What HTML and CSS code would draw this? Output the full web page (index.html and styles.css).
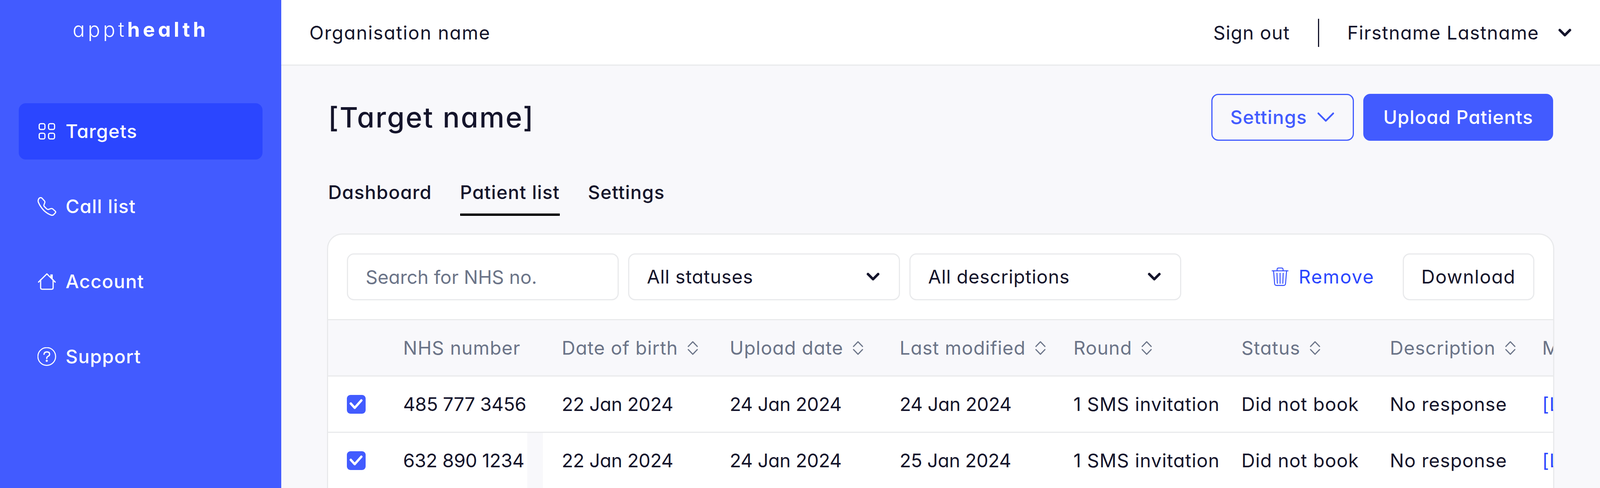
FILE: index.html
```html
<!DOCTYPE html>
<html lang="en">
<head>
<meta charset="utf-8">
<title>Target patient list</title>
<link rel="stylesheet" href="styles.css">
</head>
<body>
<div class="app">
<aside class="sidebar">
  <div class="logo"><span class="logo-light">appt</span><span class="logo-bold">health</span></div>
  <nav class="nav">
    <a class="nav-item active">
      <svg class="icon48" viewBox="48 66 144 144"><g fill="none" stroke="#fff" stroke-width="9"><rect x="61" y="79" width="44" height="44" rx="12"/><rect x="133" y="79" width="46" height="44" rx="12"/><rect x="61" y="152" width="44" height="44" rx="12"/><rect x="133" y="152" width="46" height="44" rx="12"/></g></svg>
      <span>Targets</span>
    </a>
    <a class="nav-item">
      <svg class="icon48" viewBox="48 60 144 144"><path fill="none" stroke="#fff" stroke-width="9" stroke-linejoin="round" stroke-linecap="round" d="M62 68Q72 60 82 68L102 90Q107 97 103 105L97 122Q96 128 102 134L118 150Q124 156 132 155L152 148Q160 146 166 152L184 168Q190 174 186 180L172 195Q164 202 152 198Q124 188 98 164Q70 136 54 98Q50 80 62 68Z"/></svg>
      <span>Call list</span>
    </a>
    <a class="nav-item">
      <svg class="icon48" viewBox="48 48 144 144"><g fill="none" stroke="#fff" stroke-width="9" stroke-linecap="round" stroke-linejoin="round"><path d="M56 124L120 61L184 124"/><path d="M72 106V168Q72 179 83 179H157Q168 179 168 168V106"/></g><path fill="#fff" d="M147 65H165V102L147 84Z"/></svg>
      <span>Account</span>
    </a>
    <a class="nav-item">
      <svg class="icon48" viewBox="48 54 144 144"><circle cx="119" cy="125" r="68" fill="none" stroke="#fff" stroke-width="8"/><path fill="none" stroke="#fff" stroke-width="10" stroke-linecap="round" d="M98 108Q100 90 120 90Q141 90 141 107Q141 118 128 124Q119 129 119 140"/><circle cx="119" cy="158" r="8" fill="#fff"/></svg>
      <span>Support</span>
    </a>
  </nav>
</aside>
<div class="main">
  <header class="topbar">
    <div class="org">Organisation name</div>
    <div class="account">
      <span class="tight">Sign out</span>
      <span class="divider"></span>
      <span class="name">Firstname Lastname</span>
      <svg class="icon48 user-chevron" viewBox="0 0 48 48"><path class="chev-thick" d="M11 17L24 30L37 17"/></svg>
    </div>
  </header>
  <section class="content">
    <div class="title-row">
      <h1 class="title">[Target name]</h1>
      <div class="title-actions">
        <button class="btn btn-outline"><span>Settings</span><svg class="icon48" viewBox="0 0 48 48"><path class="chev-thin" d="M5 14L24 33L43 14"/></svg></button>
        <button class="btn btn-primary">Upload Patients</button>
      </div>
    </div>
    <div class="tabs">
      <a class="tab">Dashboard</a>
      <a class="tab current">Patient list</a>
      <a class="tab">Settings</a>
    </div>
    <div class="card">
      <div class="toolbar">
        <input class="field search" placeholder="Search for NHS no.">
        <div class="field select"><span>All statuses</span><svg class="icon48" viewBox="0 0 48 48"><path class="chev-thick" d="M11 17L24 30L37 17"/></svg></div>
        <div class="field select"><span>All descriptions</span><svg class="icon48" viewBox="0 0 48 48"><path class="chev-thick" d="M11 17L24 30L37 17"/></svg></div>
        <div class="remove">
          <svg class="icon48" viewBox="33 42 144 144"><g fill="none" stroke="#2b46ff" stroke-width="7" stroke-linecap="round" stroke-linejoin="round"><path d="M44 68H166"/><path d="M82 66V58Q82 46 94 46H116Q128 46 128 58V66"/><path d="M55 68L63 165Q64 180 79 180H131Q146 180 147 165L155 68"/><path d="M81 86L84 164M105 86V164M129 86L126 164"/></g></svg>
          <span>Remove</span>
        </div>
        <button class="field download">Download</button>
      </div>
      <div class="row head">
        <div class="cell"></div>
        <div class="cell nhs">NHS number</div>
        <div class="cell gap"></div>
        <div class="cell dob"><span>Date of birth</span><svg class="sort" viewBox="0 0 27 36"><path d="M2 14L13.5 2L25 14M2 22L13.5 34L25 22"/></svg></div>
        <div class="cell up"><span>Upload date</span><svg class="sort" viewBox="0 0 27 36"><path d="M2 14L13.5 2L25 14M2 22L13.5 34L25 22"/></svg></div>
        <div class="cell mod"><span>Last modified</span><svg class="sort" viewBox="0 0 27 36"><path d="M2 14L13.5 2L25 14M2 22L13.5 34L25 22"/></svg></div>
        <div class="cell rnd"><span>Round</span><svg class="sort" viewBox="0 0 27 36"><path d="M2 14L13.5 2L25 14M2 22L13.5 34L25 22"/></svg></div>
        <div class="cell sta"><span>Status</span><svg class="sort" viewBox="0 0 27 36"><path d="M2 14L13.5 2L25 14M2 22L13.5 34L25 22"/></svg></div>
        <div class="cell des"><span>Description</span><svg class="sort" viewBox="0 0 27 36"><path d="M2 14L13.5 2L25 14M2 22L13.5 34L25 22"/></svg></div>
        <div class="cell last">Message</div>
      </div>
      <div class="row">
        <div class="cell"><span class="check"><svg viewBox="0 0 48 48"><path d="M10 22L20 33L37 14"/></svg></span></div>
        <div class="cell nhs num">485 777 3456</div>
        <div class="cell gap"></div>
        <div class="cell dob num">22 Jan 2024</div>
        <div class="cell up num">24 Jan 2024</div>
        <div class="cell mod num">24 Jan 2024</div>
        <div class="cell rnd">1 SMS invitation</div>
        <div class="cell sta">Did not book</div>
        <div class="cell des">No response</div>
        <div class="cell last link">[Link]</div>
      </div>
      <div class="row">
        <div class="cell"><span class="check"><svg viewBox="0 0 48 48"><path d="M10 22L20 33L37 14"/></svg></span></div>
        <div class="cell nhs num">632 890 1234</div>
        <div class="cell gap tinted"></div>
        <div class="cell dob num">22 Jan 2024</div>
        <div class="cell up num">24 Jan 2024</div>
        <div class="cell mod num">25 Jan 2024</div>
        <div class="cell rnd">1 SMS invitation</div>
        <div class="cell sta">Did not book</div>
        <div class="cell des">No response</div>
        <div class="cell last link">[Link]</div>
      </div>
    </div>
  </section>
</div>
</div>
</body>
</html>
```
FILE: styles.css
```css
* { box-sizing: border-box; }
body {
  margin: 0;
  font-family: Inter, "Noto Sans", sans-serif;
  font-feature-settings: "cv11";
  font-size: 48px;
  line-height: 72px;
  letter-spacing: 1px;
  color: #14142b;
  background: #f8f8fb;
}
.app { height: 1248px; overflow: hidden; display: flex; }
.icon48 { width: 48px; height: 48px; flex: none; display: block; }
.chev-thick { fill: none; stroke: #14142b; stroke-width: 6.5; stroke-linecap: round; stroke-linejoin: round; }
.chev-thin { fill: none; stroke: #425bff; stroke-width: 4.5; stroke-linecap: round; stroke-linejoin: round; }

.sidebar {
  width: 720px;
  flex: none;
  background: #425bff;
  padding: 0 48px;
  color: #fff;
}
.logo {
  height: 264px;
  padding-top: 40px;
  text-align: center;
  font-size: 52px;
  letter-spacing: 7.6px;
}
.logo-light { font-weight: 300; }
.logo-bold { font-weight: 700; }
.nav { display: flex; flex-direction: column; gap: 48px; }
.nav-item {
  height: 144px;
  display: flex;
  align-items: center;
  gap: 24px;
  padding-left: 48px;
  border-radius: 18px;
  font-weight: 500;
  letter-spacing: 1.3px;
}
.nav-item.active { background: #2b46ff; }

.main { flex: 1; min-width: 0; display: flex; flex-direction: column; }
.topbar {
  height: 168px;
  flex: none;
  background: #fff;
  border-bottom: 3px solid #e9eaec;
  padding: 3px 66px 0 72px;
  display: flex;
  align-items: center;
  justify-content: space-between;
}
.org { letter-spacing: 1.8px; }
.tight { letter-spacing: 1.2px; }
.name { letter-spacing: 1.4px; }
.account { display: flex; align-items: center; }
.divider { width: 3px; height: 72px; margin: 0 72px; background: #14142b; }
.user-chevron { margin-left: 42px; }

.content { padding: 72px 120px 0; }
.title-row { display: flex; justify-content: space-between; align-items: center; height: 120px; }
.title { margin: 0; font-size: 72px; line-height: 108px; font-weight: 500; letter-spacing: 3px; }
.title-actions { display: flex; gap: 24px; }
.btn {
  height: 120px;
  padding: 0 48px;
  border-radius: 18px;
  font: inherit;
  letter-spacing: 1.2px;
  font-weight: 500;
  display: flex;
  align-items: center;
  gap: 24px;
  border: 3px solid #425bff;
}
.btn-outline { background: transparent; color: #425bff; padding: 0 45px; }
.btn-primary { background: #425bff; color: #fff; }

.tabs { display: flex; gap: 72px; margin-top: 96px; }
.tab { padding-bottom: 18px; border-bottom: 6px solid transparent; font-weight: 500; letter-spacing: 1.2px; }
.tab.current { border-bottom-color: #000; }

.card {
  margin-top: 48px;
  padding-bottom: 72px;
  background: #fff;
  border-radius: 36px;
  box-shadow: 0 0 0 3px #e9eaec;
  overflow: hidden;
}
.toolbar {
  display: flex;
  align-items: center;
  gap: 24px;
  padding: 48px;
  border-bottom: 3px solid #e9eaec;
}
.field {
  height: 120px;
  background: #fff;
  border: 3px solid #e9eaec;
  border-radius: 18px;
  padding: 0 45px;
  font: inherit;
  letter-spacing: .8px;
  color: inherit;
  flex: none;
  outline: none;
}
.search { width: 696px; letter-spacing: 0; }
.search::placeholder { color: #6b7488; opacity: 1; }
.select { width: 696px; display: flex; align-items: center; justify-content: space-between; padding-right: 42px; }
.remove { margin-left: auto; display: flex; align-items: center; gap: 24px; color: #2b46ff; margin-right: 48px; letter-spacing: 2px; }
.download { letter-spacing: 1.5px; }

.row {
  display: grid;
  grid-template-columns: 192px 318px 40px 430px 435px 445px 430px 380px 390px 200px;
  height: 144px;
  border-bottom: 3px solid #e9eaec;
  white-space: nowrap;
}
.row.head { background: #f8f8fb; color: #6b7488; }
.cell { display: flex; align-items: center; }
.cell:first-child { padding-left: 48px; }
.dob, .up, .mod, .rnd, .sta, .des, .last { padding-left: 48px; gap: 24px; }
.num { letter-spacing: -.4px; }
.gap.tinted { background: #f8f8fb; }
.link { color: #2b46ff; }
.sort { width: 27px; height: 36px; flex: none; }
.sort path { fill: none; stroke: #6b7488; stroke-width: 3; stroke-linecap: round; stroke-linejoin: round; }
.check {
  width: 48px;
  height: 48px;
  border-radius: 9px;
  background: #425bff;
  display: block;
}
.check svg { display: block; width: 48px; height: 48px; }
.check path { fill: none; stroke: #fff; stroke-width: 6; stroke-linecap: round; stroke-linejoin: round; }
```
